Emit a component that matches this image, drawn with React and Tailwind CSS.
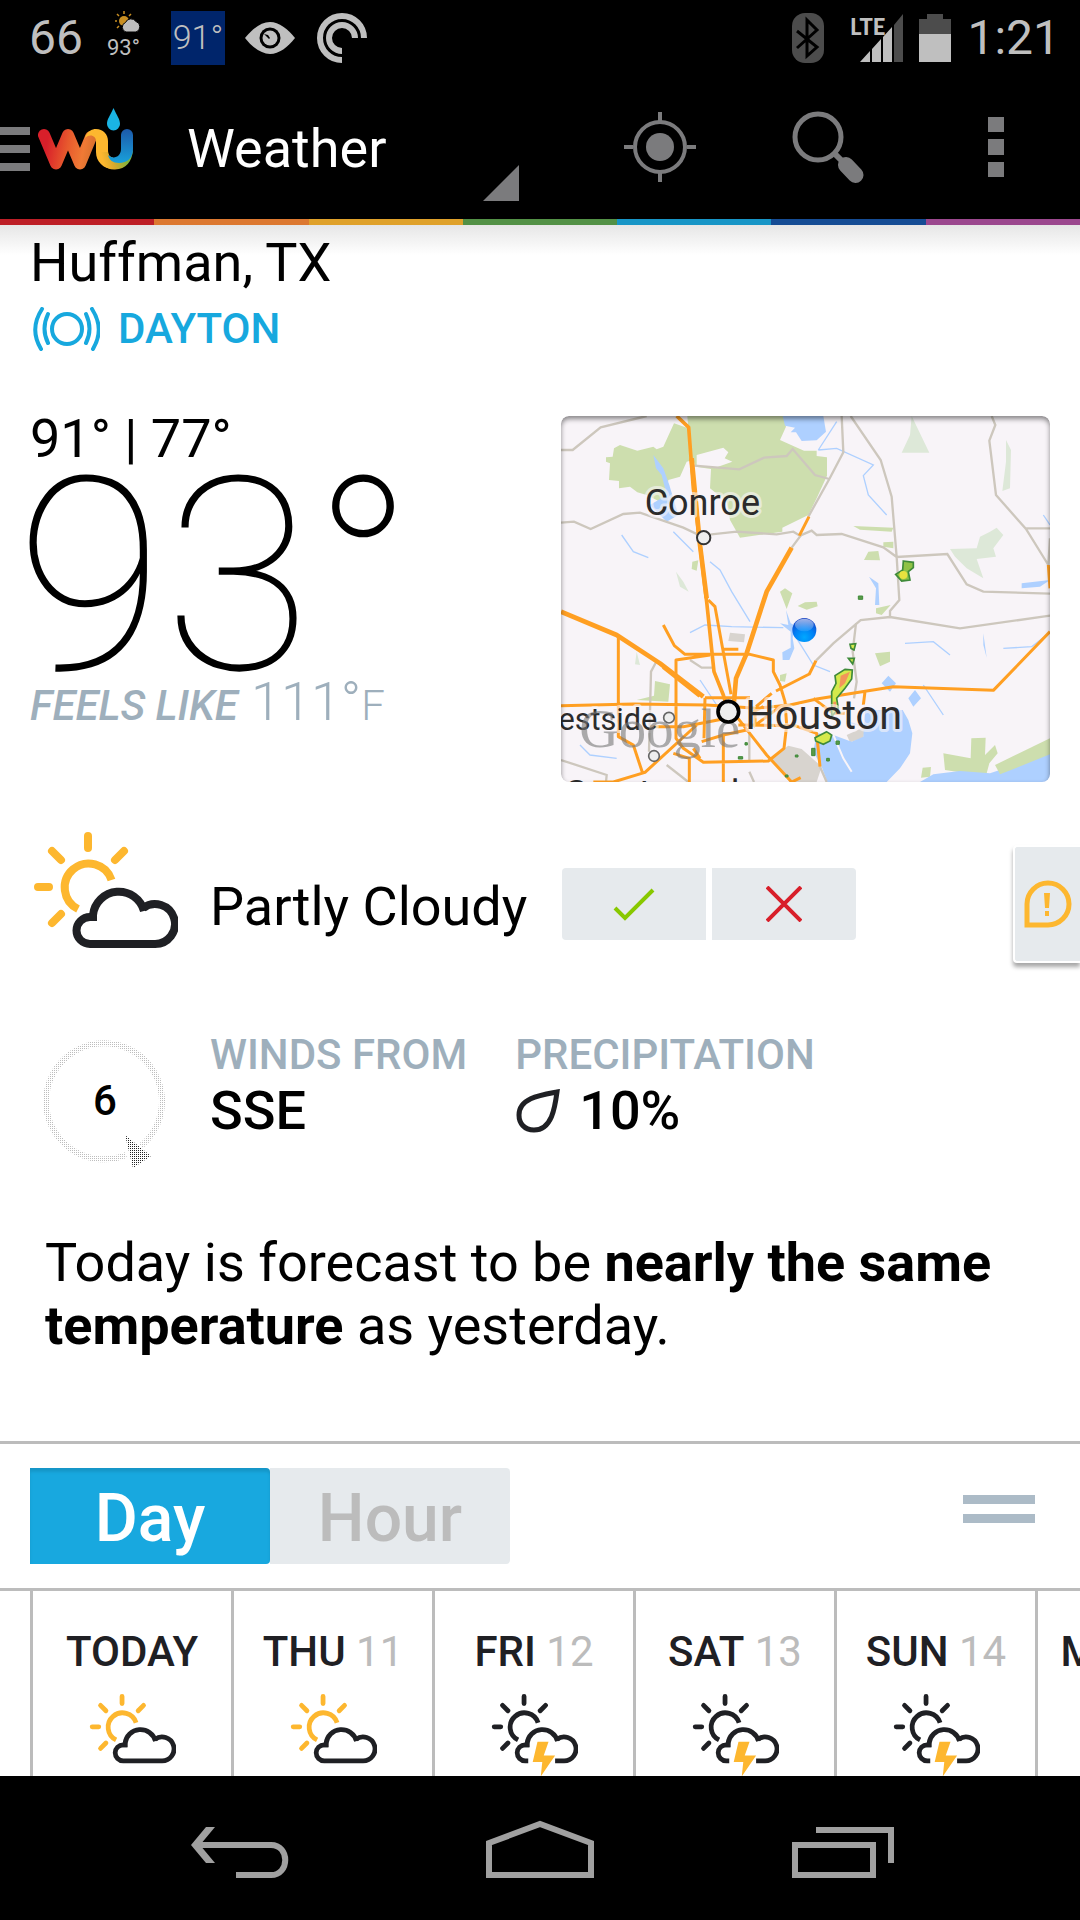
import { useState } from "react";

const STRIPE = [
  "bg-[#bd1e26]",
  "bg-[#dc7830]",
  "bg-[#dfa12a]",
  "bg-[#529045]",
  "bg-[#1795c6]",
  "bg-[#154c94]",
  "bg-[#9b478e]",
];

const DAYS = [
  { name: "TODAY", date: "", storm: false },
  { name: "THU", date: "11", storm: false },
  { name: "FRI", date: "12", storm: true },
  { name: "SAT", date: "13", storm: true },
  { name: "SUN", date: "14", storm: true },
  { name: "MON", date: "15", storm: true },
];

/** Outlined sun behind a cloud; the storm version adds a bolt. */
function SkyIcon({ storm, className }) {
  const sun = storm ? "#1f2024" : "#fdb72f";
  return (
    <svg viewBox="0 0 145 144" className={className} fill="none" aria-hidden="true">
      <g stroke={sun} strokeWidth="8" strokeLinecap="round">
        <path d="M55 4v12M19 19l9 9M91 19l-9 9M5 55h11M28 82l-9 9" />
        <path strokeLinecap="butt" d="M78.500 48A24 24 0 1 0 45 77" />
      </g>
      <g stroke="#1f2024" strokeWidth="8">
        <path d="M60 89V83A26 26 0 0 1 111 79" />
        {storm ? (
          <path d="M62 112H57A13.500 13.500 0 0 1 57 85H64M107 112H121.500A20 20 0 1 0 110 76" />
        ) : (
          <path d="M64 85H57A13.500 13.500 0 0 0 57 112H121.500A20 20 0 1 0 110 76" />
        )}
      </g>
      {storm && <path fill="#fdb72f" d="M77.500 80H96L88 103H107L83 138 85.500 114H69.500Z" />}
    </svg>
  );
}

function Logo() {
  return (
    <svg viewBox="38 108 96 62" className="h-[62px] w-24 shrink-0" fill="none" role="img" aria-label="Weather Underground">
      <defs>
        <linearGradient id="wu-w" gradientUnits="userSpaceOnUse" x1="42" y1="140" x2="94" y2="150">
          <stop offset="0.1" stopColor="#d81f2a" />
          <stop offset="0.5" stopColor="#e85a2d" />
          <stop offset="0.8" stopColor="#f07a35" />
          <stop offset="1" stopColor="#d8702e" />
        </linearGradient>
        <linearGradient id="wu-u" gradientUnits="userSpaceOnUse" x1="102" y1="158" x2="126" y2="152">
          <stop offset="0" stopColor="#fdb72f" />
          <stop offset="0.4" stopColor="#d8a92c" />
          <stop offset="1" stopColor="#7cb33d" />
        </linearGradient>
        <linearGradient id="wu-b" gradientUnits="userSpaceOnUse" x1="127" y1="130" x2="127" y2="165">
          <stop offset="0" stopColor="#1c5bab" />
          <stop offset="1" stopColor="#18a5de" />
        </linearGradient>
      </defs>
      <path stroke="url(#wu-w)" strokeWidth="12" strokeLinecap="round" strokeLinejoin="round" d="M44 135 56 163.500 68 135 80 163.500 91 137" />
      <path fill="#fdb72f" d="M85 138C87 131 92 129 96 129C103 129 108 134 108 141V150C108 156 111 158 115 158L116 169C104 170 96 162 96 152V141C96 136 90 133 85 138Z" />
      <path fill="url(#wu-u)" d="M101 152H108C108 156 111 158 115 158C121 158 124 156 133 150C132 162 126 169 115 169.500C106 170 99 163 97 156Z" />
      <path fill="url(#wu-b)" d="M121 135a6 6 0 0 1 12 0v14C133 158 127 163 119 163C113 163 109 160 108 155C113 160 121 157 121 149Z" />
      <path fill="#1ab4e4" d="M113.500 108C117 116 120 119 120 124a6.500 6.500 0 0 1-13 0C107 119 110 116 113.500 108Z" />
    </svg>
  );
}

function StatusBar() {
  return (
    <div className="flex h-[75px] shrink-0 items-center justify-between bg-black pl-[29px] pr-5 text-[#bfbfbf]">
      <div className="flex items-center">
        <span className="w-[74px] text-5xl">66</span>
        <div className="flex w-[68px] flex-col items-start pl-1">
          <svg viewBox="0 0 26 21" className="ml-2 h-[21px] w-[26px]" aria-hidden="true">
            <circle cx="9" cy="10" r="5" fill="#c98f22" />
            <path stroke="#c98f22" strokeWidth="1.500" d="M9 0v3M2 3l2 2M16 3l-2 2M0 10h2M2 17l2-2" />
            <path fill="#bfbfbf" stroke="#000" strokeWidth="1" d="M11 21a5 5 0 0 1-.5-9.500 6 6 0 0 1 10.500-1 5.500 5.500 0 0 1 0 10.500Z" />
          </svg>
          <span className="text-[22px] leading-8">93°</span>
        </div>
        <span className="grid h-[54px] w-[54px] place-items-center bg-[#00256b] text-[34px] font-light">91°</span>
        <svg viewBox="0 0 50 32" className="ml-5 h-8 w-[50px]" aria-hidden="true">
          <path fill="#bfbfbf" d="M0 16C7 7 16 0 25 0s18 7 25 16C43 25 34 32 25 32S7 25 0 16Z" />
          <circle cx="25" cy="16" r="10.500" />
          <circle cx="25" cy="16" r="7.500" fill="#bfbfbf" />
          <path d="M19 12l4 1 2 3-1 1-3-3Z" />
        </svg>
        <svg viewBox="0 0 50 50" className="ml-[22px] h-[50px] w-[50px]" fill="none" stroke="#bfbfbf" strokeWidth="6" aria-hidden="true">
          <path d="M47 25A22 22 0 1 0 25 47" />
          <path d="M38 25A13 13 0 1 0 25 38" />
        </svg>
      </div>

      <div className="flex items-center">
        <svg viewBox="0 0 32 50" className="h-[50px] w-8" aria-hidden="true">
          <rect width="32" height="50" rx="13" fill="#4c4c4c" />
          <path fill="none" stroke="#000" strokeWidth="3" d="M5 18l20 16-10 9V7l10 10L5 35" />
        </svg>
        <svg viewBox="0 0 52 48" className="ml-7 h-12 w-[52px] overflow-visible" aria-hidden="true">
          <path fill="#bfbfbf" d="M8 48l10-11v11ZM20 35l9-10v23h-9ZM31 23l9-10v35h-9Z" />
          <path fill="#4c4c4c" d="M42 11l9-11v48h-9Z" />
          <text x="-2" y="21" fill="#bfbfbf" className="font-[Lato] text-[22px] font-black">LTE</text>
        </svg>
        <svg viewBox="0 0 32 48" className="ml-[15px] h-12 w-8" aria-hidden="true">
          <path fill="#4c4c4c" d="M8 0h16v5h8v15H0V5h8Z" />
          <path fill="#bfbfbf" d="M0 20h32v28H0Z" />
        </svg>
        <span className="ml-4 text-5xl">1:21</span>
      </div>
    </div>
  );
}

function ActionBar() {
  return (
    <header className="flex h-36 shrink-0 items-center bg-black text-white">
      <button aria-label="Open navigation" className="flex items-center">
        <span className="mr-2 flex w-[30px] flex-col gap-2.5 pt-1">
          <span className="h-2 bg-[#7b7b7d]" />
          <span className="h-2 bg-[#7b7b7d]" />
          <span className="h-2 bg-[#7b7b7d]" />
        </span>
        <span className="pb-4">
          <Logo />
        </span>
      </button>
      <button className="ml-[53px] flex h-full w-[332px] items-center justify-between text-[54px]">
        <span className="pt-0.5">Weather</span>
        <svg viewBox="0 0 36 36" className="mb-[18px] h-9 w-9 self-end" aria-hidden="true">
          <path fill="#7b7b7d" d="M36 0v36H0Z" />
        </svg>
      </button>
      <div className="ml-auto flex h-full items-center">
        <button aria-label="Use my location" className="grid w-[168px] place-items-center">
          <svg viewBox="0 0 72 72" className="h-[72px] w-[72px]" fill="none" stroke="#7b7b7d" strokeWidth="4">
            <circle cx="36" cy="36" r="25" />
            <circle cx="36" cy="36" r="14" fill="#7b7b7d" stroke="none" />
            <path d="M36 1v9M36 62v9M0 36h9M63 36h9" />
          </svg>
        </button>
        <button aria-label="Search" className="grid w-[168px] place-items-center">
          <svg viewBox="0 0 72 72" className="h-[72px] w-[72px]" fill="none" stroke="#7b7b7d">
            <circle cx="26" cy="26" r="23" strokeWidth="5" />
            <path strokeWidth="6" d="M42 42l8 8" />
            <path strokeWidth="16" strokeLinecap="round" d="M54 54l9.500 10" />
          </svg>
        </button>
        <button aria-label="More options" className="grid w-[168px] place-items-center">
          <svg viewBox="0 0 16 60" className="h-[60px] w-4" fill="#7b7b7d">
            <path d="M0 0h16v15H0ZM0 22h16v16H0ZM0 45h16v15H0Z" />
          </svg>
        </button>
      </div>
    </header>
  );
}

/** Radar thumbnail of the Houston area. */
function RadarMap() {
  return (
    <svg viewBox="33 33 1467 1098" className="block h-full w-full" fill="none" role="img" aria-label="Radar map near Houston">
      <defs>
        <radialGradient id="pin" cx="0.5" cy="0.8" r="0.8">
          <stop offset="0" stopColor="#00a8ff" />
          <stop offset="0.5" stopColor="#0080f5" />
          <stop offset="1" stopColor="#1a3fc0" />
        </radialGradient>
        <linearGradient id="gloss" x1="0" y1="0" x2="0" y2="1">
          <stop offset="0" stopColor="#fff" stopOpacity="0.6" />
          <stop offset="1" stopColor="#fff" stopOpacity="0.100" />
        </linearGradient>
      </defs>
      <path fill="#f8f4f8" d="M33 33h1467v1098H33Z" />

      {/* forest and parks */}
      <g fill="#cddeae">
        <path d="M372 55 415 70 412 33H700L708 65 690 105 735 125 762 137H800V153L831 157V212L800 280 775 330 697 368V380L570 398 540 345 530 290 480 250 483 192 437 185 430 165 410 170 390 215 355 225 350 265 330 290 290 270 262 262 240 245 207 250V228L177 225 180 175 168 170V157L188 155 192 130 210 120 262 137 310 125 320 133 340 125Z" />
        <path d="M690 560 705 550 727 565 710 612ZM743 603 765 592 800 590 803 604 770 614ZM910 363 1030 368 1025 380 930 374ZM942 465 955 440 985 438 990 466ZM1000 412 1030 410 1030 430 1000 425ZM427 470 445 466 440 497 425 492ZM975 745 1020 740 1020 770 990 784ZM978 610 1022 600 995 630 978 625ZM315 828 360 838 355 890 260 885 312 872ZM1264 1000 1307 998 1305 1050 1335 1020 1343 1045 1318 1075 1310 1105 1270 1108 1185 1095 1180 1045 1262 1060ZM1118 1088 1143 1086 1140 1115 1113 1118ZM690 810 710 805 705 830 690 828Z" />
      </g>
      <path fill="#dde8d8" d="M1085 33 1138 143H1055L1080 90ZM1368 105 1383 135 1380 250 1357 258 1368 170ZM1200 432 1280 430 1290 395 1320 380 1340 368 1360 390 1330 430 1338 455 1280 462 1300 520 1250 490 1215 455ZM378 500 400 530 416 560 390 545ZM260 740 270 780 255 778Z" />
      <path fill="#f8f4f8" d="M440 150 520 128 535 142 524 160 547 170 500 187 440 182Z" />
      <path fill="#d8d4cf" d="M540 683 585 688 582 712 535 708ZM660 1060 715 1022 755 1032 815 1085 800 1131H720ZM890 990 945 965 940 1000 900 1012Z" />

      {/* water */}
      <g fill="#aed0ff">
        <path d="M698 33H820L828 80 800 106 755 108 738 82H722L735 68 705 62ZM310 150 340 190 358 240 385 330 350 350 300 300 350 270 335 210 318 190Z" />
        <path d="M708 615 722 655 732 660 728 700 733 730 718 765H698L697 742 722 728 722 680 690 655 715 660ZM957 515 985 535 988 600 975 600 978 550ZM995 835 1015 812 1038 835 1020 860ZM1075 880 1095 855 1113 880 1090 905Z" />
        <path d="M945 915 1058 915 1075 945 1087 985 1080 1045 1050 1090 1010 1131H832L815 1085 790 1040 800 985 850 990 905 1010 940 995Z" />
        <path d="M1110 1131 1150 1108 1230 1098 1320 1105 1500 1045V1131Z" />
        <path d="M1415 535 1500 525 1470 545 1415 550ZM1300 685 1310 758 1300 720Z" />
      </g>
      <path fill="#cddeae" d="M1335 1080 1500 1000V1048L1350 1108Z" />
      <g stroke="#aed0ff" strokeWidth="4">
        <path d="M805 135 860 130 970 180 940 212 955 270 1010 330M860 50 805 135M480 470 510 495 545 560 600 650M420 683 465 660 545 665 700 668M1065 715 1150 710 1200 750M1120 840 1180 930M1360 730 1445 725 1490 690M890 950 960 970M90 1020 120 1050 200 1060M370 380 430 440M215 390 250 440 295 458M1480 330 1500 360M450 825 500 900M740 700 790 780 840 800" />
        <path stroke="#f8f4f8" strokeWidth="6" d="M850 990 880 1060 905 1100" />
      </g>

      {/* minor roads */}
      <g stroke="#cdc7bd" strokeWidth="7">
        <path d="M33 135H68L152 67 290 33M33 353 72 350 122 372 220 327 270 323 400 368 450 392 560 380 680 388 730 380 750 392 785 377 800 390 875 387 1000 427 1040 456 1192 447 1250 538 1300 560 1500 566M433 182 568 193 642 158 710 153 728 132 795 210 838 222M875 33 880 142 838 222 775 335M902 33 992 165 1025 275 1040 456 1048 585 1020 618V635M1325 33 1336 60 1318 107 1338 270 1428 372 1495 480M1428 370H1500M1500 400 1495 480" />
        <path d="M1500 632 1230 670 1020 636 932 645 850 715 798 767M918 655 908 740 920 830 912 880M752 392 725 428M420 765 455 788H490M320 768 303 800 297 1040M33 1065 170 1110 168 1131M350 1080 415 1131M598 980V1065M598 1100 612 1131M810 1085 830 1131" />
      </g>

      {/* highways */}
      <g stroke="#ff9f22" strokeWidth="9" strokeLinejoin="round">
        <path strokeWidth="11" d="M380 33 416 67 430 250 470 590 492 800 520 870 530 905" />
        <path strokeWidth="14" d="M425 160 450 420 470 580M725 428 650 560 590 745 558 820 552 890M33 620 200 690 330 775 460 875M340 785 450 872" />
        <path d="M777 335 748 392M475 585 495 605 543 868M340 660 373 722 405 748 600 748 670 765V800L690 840 705 890 710 960 702 1030 655 1068 460 1072 400 1030 378 1000V765L480 750M520 733H565M205 695V995L250 1020 277 1102M33 902 250 897 470 900 620 910 720 900 800 882 1030 845 1330 856 1500 680M678 858 778 807 798 767M1495 480 1500 550M945 860 940 900M465 878H600M465 878 462 1000M530 940 400 965 300 965M560 935 650 1050 725 1131M565 960 735 962 800 985 810 1085M520 985V1131M418 1131V1060L370 1045M440 960 285 1102 190 1131H130M618 905 665 865M690 905 610 965M455 1010 520 990 590 975M615 905V965M600 925 640 905M790 880 850 925 885 925M430 1030 450 1060M725 1131 752 1118" />
      </g>

      {/* rain cells */}
      <g fill="#d5e94c" stroke="#3f8a3a" strokeWidth="5">
        <path fill="#8fc246" d="M1060 468 1090 472 1090 488 1075 500 1080 525 1055 528 1037 508 1058 495Z" />
        <path d="M885 793 907 795 905 822 885 850 860 880 865 910 845 935 845 860 858 835 855 812ZM900 718 917 716 912 735 903 730ZM895 760H913L908 777ZM795 998 830 980 845 990 840 1008 820 1018 797 1008Z" />
        <path fill="#5a9a48" strokeWidth="3" d="M925 573H938V583H925ZM858 1008H868V1018H858ZM785 1030H795V1052H785ZM565 1055H578V1062H565ZM585 1013H592V1020H585ZM736 1050H744V1056H736ZM830 1060H838V1068H830ZM706 1110H714V1116H706Z" />
      </g>
      <path fill="#f3955a" d="M872 812 900 800 885 835 868 850ZM850 890H858V910H850Z" />
      <circle cx="1060" cy="510" r="12" fill="#e9e23f" />

      {/* place labels */}
      <g fill="#2b2b2b" stroke="#f8f4f8" strokeWidth="18" strokeOpacity="0.6" strokeLinejoin="round" style={{ paintOrder: "stroke" }}>
        <text x="284" y="330" className="text-[108px]">Conroe</text>
        <text x="586" y="971" className="text-[124px]">Houston</text>
        <text x="322" y="975" textAnchor="end" className="text-[92px]">Westside</text>
        <text x="42" y="1202" className="text-[108px]">Greatwood</text>
      </g>
      <text x="88" y="1025" fill="#777" fillOpacity="0.6" className="font-[Liberation_Serif] text-[164px]">Google</text>
      <g fill="#eee" stroke="#333">
        <circle cx="461" cy="398" r="20" strokeWidth="6" />
        <circle cx="535" cy="920" r="31" stroke="#000" strokeWidth="11" />
        <circle cx="357" cy="938" r="16" stroke="#666" strokeWidth="5" />
        <circle cx="312" cy="1053" r="16" stroke="#666" strokeWidth="5" />
      </g>
      <circle cx="763" cy="675" r="36" fill="url(#pin)" />
      <ellipse cx="763" cy="660" rx="28" ry="19" fill="url(#gloss)" />
    </svg>
  );
}

function WindDial() {
  return (
    <div className="relative mt-2.5 grid h-[122px] w-[122px] place-items-center">
      <svg viewBox="0 0 122 130" className="absolute left-0 top-0 h-[130px] w-[122px]" aria-hidden="true">
        <defs>
          <pattern id="dots-light" width="2" height="2" patternUnits="userSpaceOnUse">
            <path fill="#bdbdbd" d="M0 0h1v1H0Z" />
          </pattern>
          <pattern id="dots-dark" width="2" height="2" patternUnits="userSpaceOnUse">
            <path fill="#222" d="M0 0h1v1H0Z" />
          </pattern>
        </defs>
        <path fill="none" stroke="url(#dots-light)" strokeWidth="6" d="M82 115A58 58 0 1 1 97 106" />
        <path fill="url(#dots-dark)" d="M81 95 107 116 89 128Z" />
      </svg>
      <span className="text-[42px] font-medium leading-none">6</span>
    </div>
  );
}

function Conditions() {
  return (
    <>
      <section className="px-[30px]">
        <h1 className="text-[54px] leading-[63px]">Huffman, TX</h1>
        <a href="#station" className="flex items-center gap-[18px] pt-2 text-[42px] font-medium leading-[54px] text-[#17a8de]">
          <svg viewBox="0 0 70 44" className="h-11 w-[70px]" fill="none" stroke="#17a8de" strokeWidth="4" strokeLinecap="round" aria-hidden="true">
            <circle cx="37" cy="22" r="15" />
            <path d="M18 7q-7 15 0 29M12 2q-13 20-1 40M56 7q7 15 0 29M62 2q13 20 1 40" />
          </svg>
          DAYTON
        </a>
      </section>

      <section className="flex items-start justify-between px-[30px] pt-15">
        <div>
          <p className="text-[54px] leading-[46px]">91° | 77°</p>
          <p className="-ml-3.5 text-[270px] font-thin leading-[230px]">93°</p>
          <p className="text-[54px] font-light leading-5 text-[#9eafbc]">
            <em className="text-[42px] font-medium">FEELS LIKE</em> 111°<span className="text-[42px]">F</span>
          </p>
        </div>
        <a href="#radar" className="relative h-[366px] w-[489px] overflow-hidden rounded-lg">
          <RadarMap />
          <span className="absolute inset-0 rounded-lg shadow-[inset_0_3px_5px_rgba(0,0,0,0.45)]" />
        </a>
      </section>
    </>
  );
}

function CurrentSky() {
  return (
    <section className="flex items-center pl-[33px] pt-[50px]">
      <SkyIcon className="h-36 w-[145px] shrink-0" />
      <p className="ml-8 w-[352px] pt-1 text-[54px] leading-[63px]">Partly Cloudy</p>
      <div className="flex gap-1.5">
        <button aria-label="Report is right" className="grid h-[72px] w-36 place-items-center rounded-l bg-[#e6eaed]">
          <svg viewBox="0 0 42 33" className="h-[33px] w-[42px]" fill="none" stroke="#88c800" strokeWidth="4">
            <path d="M2 20l10 10L40 2" />
          </svg>
        </button>
        <button aria-label="Report is wrong" className="grid h-[72px] w-36 place-items-center rounded-r bg-[#e6eaed]">
          <svg viewBox="0 0 36 36" className="h-9 w-9" fill="none" stroke="#d81f2a" strokeWidth="4">
            <path d="M1 1l34 34M35 1L1 35" />
          </svg>
        </button>
      </div>
      <button aria-label="Report a hazard" className="ml-auto grid h-[118px] w-[67px] place-items-center rounded-l border-y-2 border-l-2 border-white bg-[#e6eaed] shadow-[0_4px_4px_rgba(0,0,0,0.35)]">
        <svg viewBox="0 0 48 48" className="h-12 w-12" fill="none" stroke="#fdb72f" strokeWidth="5">
          <path d="M3 45V24A21 21 0 1 1 24 45Z" />
          <path fill="#fdb72f" stroke="none" d="M20 13h6l-1 15h-4ZM21 31h4v5h-4Z" />
        </svg>
      </button>
    </section>
  );
}

function Details() {
  return (
    <section className="flex items-start gap-11 pl-[44px] pt-[54px]">
      <WindDial />
      <dl className="flex gap-12">
        <div>
          <dt className="text-[42px] font-medium leading-[49px] text-[#9eafbc]">WINDS FROM</dt>
          <dd className="text-[54px] font-medium leading-[63px]">SSE</dd>
        </div>
        <div>
          <dt className="text-[42px] font-medium leading-[49px] text-[#9eafbc]">PRECIPITATION</dt>
          <dd className="flex items-center gap-[18px] text-[54px] font-medium leading-[63px]">
            <svg viewBox="0 0 46 44" className="h-11 w-[46px]" fill="none" stroke="#1f2024" strokeWidth="5" aria-hidden="true">
              <path d="M42 3C40 18 37 41 19 41C9 41 4 34 4 26C4 9 26 6 42 3Z" />
            </svg>
            10%
          </dd>
        </div>
      </dl>
    </section>
  );
}

function ForecastPanel() {
  const [mode, setMode] = useState("Day");
  return (
    <section className="mt-[84px] flex min-h-0 flex-1 flex-col border-t-3 border-[#bcbcbc]">
      <div className="flex shrink-0 items-center justify-between py-6 pl-[30px] pr-[45px]">
        <div className="flex text-[66px] font-medium">
          {["Day", "Hour"].map((label) => (
            <button
              key={label}
              onClick={() => setMode(label)}
              aria-pressed={mode === label}
              className={
                mode === label
                  ? "h-24 w-60 rounded-r bg-[#18a8df] pt-1.5 leading-none text-white shadow-[inset_0_4px_3px_rgba(0,0,0,0.1)]"
                  : "h-24 w-60 rounded-r bg-[#e6eaed] pt-1.5 leading-none text-[#bcbcbc]"
              }
            >
              {label}
            </button>
          ))}
        </div>
        <button aria-label="Resize panel" className="flex w-[72px] flex-col gap-2.5 pb-3.5">
          <span className="h-[9px] bg-[#acbbc7]" />
          <span className="h-[9px] bg-[#acbbc7]" />
        </button>
      </div>

      <ol className="flex min-h-0 flex-1 overflow-hidden border-t-3 border-[#bcbcbc] pl-[30px]">
        {DAYS.map((d) => (
          <li key={d.name} className="flex w-[201px] shrink-0 flex-col items-center border-l-3 border-[#bcbcbc] pt-9">
            <p className="text-[42px] leading-[49px] text-[#bcbcbc]">
              <span className="font-medium text-[#1f2024]">{d.name}</span> {d.date}
            </p>
            <SkyIcon storm={d.storm} className="mt-[18px] h-[86px] w-[87px] shrink-0" />
          </li>
        ))}
      </ol>
    </section>
  );
}

function SystemNav() {
  return (
    <nav className="flex h-36 shrink-0 items-center justify-center gap-[154px] bg-black">
      <button aria-label="Back">
        <svg viewBox="15 0 146 60" className="h-[60px] w-[146px]" fill="none" stroke="#a0a0a0" strokeWidth="6">
          <path d="M29 27H100C119 27 119 57 100 57H65" />
          <path fill="#a0a0a0" stroke="none" d="M20 27 35 9h9L29 27 44 45h-9Z" />
        </svg>
      </button>
      <button aria-label="Home">
        <svg viewBox="0 0 108 60" className="h-[60px] w-[108px]" fill="none" stroke="#a0a0a0" strokeWidth="6">
          <path d="M3 57V25L54 6l51 19v32Z" />
        </svg>
      </button>
      <button aria-label="Recent apps">
        <svg viewBox="0 0 146 60" className="h-[60px] w-[146px]" fill="none" stroke="#a0a0a0" strokeWidth="6">
          <path d="M47 27h78v30H47ZM68 12h75v33" />
        </svg>
      </button>
    </nav>
  );
}

export default function App() {
  return (
    <div className="flex h-screen flex-col overflow-hidden bg-white font-[Roboto,sans-serif] text-black">
      <StatusBar />
      <ActionBar />
      <div className="flex h-1.5 shrink-0">
        {STRIPE.map((c) => (
          <span key={c} className={`flex-1 ${c}`} />
        ))}
      </div>
      <main className="flex min-h-0 flex-1 flex-col bg-linear-to-b from-[#e6e6e6] to-white to-[30px] pt-1.5">
        <Conditions />
        <CurrentSky />
        <Details />
        <p className="px-[45px] pt-[69px] text-[54px] leading-[63px]">
          Today is forecast to be <strong className="font-bold">nearly the same temperature</strong> as yesterday.
        </p>
        <ForecastPanel />
      </main>
      <SystemNav />
    </div>
  );
}
